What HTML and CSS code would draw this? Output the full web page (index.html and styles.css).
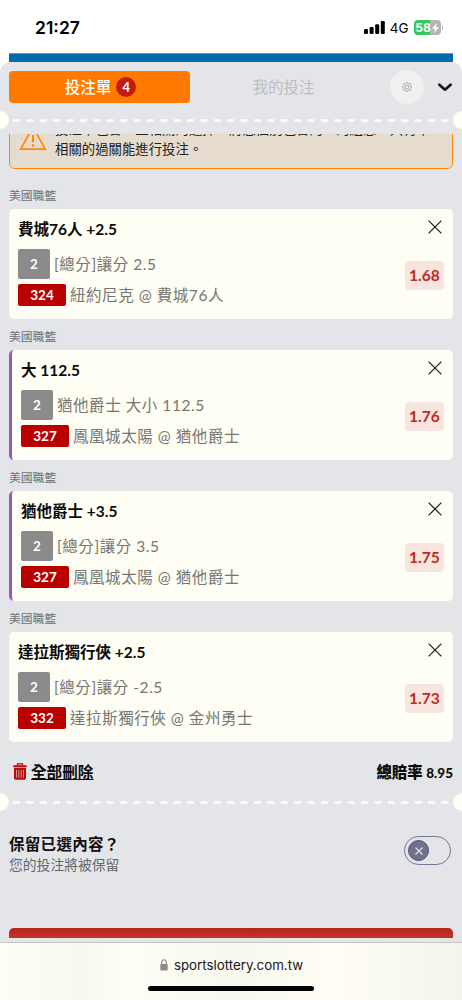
FILE: index.html
```
<!DOCTYPE html>
<html lang="zh-Hant">
<head>
<meta charset="utf-8">
<title>投注單</title>
<link rel="stylesheet" href="styles.css">
</head>
<body>
<div class="phone">
  <header class="status">
    <span class="time">21:27</span>
    <div class="status-right">
      <svg class="signal" width="21" height="13" viewBox="0 0 21 13"><rect x="0" y="8" width="4" height="5" rx="1.2"/><rect x="5.6" y="6" width="4" height="7" rx="1.2"/><rect x="11.2" y="3.2" width="4" height="9.8" rx="1.2"/><rect x="16.8" y="0" width="4" height="13" rx="1.2"/></svg>
      <span class="network">4G</span>
      <div class="battery"><span>58</span><svg width="7" height="10" viewBox="0 0 7 10"><path d="M4.8 0 0 5.7h2.8L2.1 10 7 4.2H4.2z" fill="#fff"/></svg></div>
      <i class="battery-tip"></i>
    </div>
  </header>
  <div class="site-strip"></div>
  <main class="sheet">
    <nav class="tabs">
      <div class="tab active"><span>投注單</span><b class="count">4</b></div>
      <div class="tab"><span>我的投注</span></div>
      <div class="gear"><svg width="10" height="10" viewBox="0 0 22 22" fill="none" stroke="#999" stroke-width="1.8"><path d="m9 2 2-1 2 1 1 2 3-1 2 2-1 3 2 1 1 2-1 2-2 1 1 3-2 2-3-1-1 2-2 1-2-1-1-2-3 1-2-2 1-3-2-1-1-2 1-2 2-1-1-3 2-2 3 1z"/><circle cx="11" cy="11" r="4.2"/></svg></div>
      <svg class="chevron" width="14" height="9" viewBox="0 0 14 9"><path d="m1.4 1.7 5.6 5 5.6-5" fill="none" stroke="#111" stroke-width="2.6" stroke-linecap="round" stroke-linejoin="round"/></svg>
    </nav>
    <div class="tear"><i></i><svg width="441" height="3" viewBox="0 0 441 3"><path d="M2 1.5h439" stroke="#fffef4" stroke-width="2.6" stroke-dasharray="7 6.39"/></svg><i></i></div>
    <div class="notice-window">
      <div class="notice">
        <svg width="28" height="26" viewBox="0 0 28 26" fill="none" stroke="#ff8a00" stroke-width="1.7"><path d="M14 2 26.3 24.2H1.7z"/><path d="M14 10v7" stroke-width="2"/><path d="M14 19.3v2.2" stroke-width="2.2"/></svg>
        <p>投注單包含一些相關的選擇。將您個別包含的，的組息。只有不<br>相關的過關能進行投注。</p>
      </div>
    </div>

    <section class="bet">
      <h3>美國職籃</h3>
      <article class="card">
        <div class="info"><h2>費城76人 +2.5</h2>
          <div class="line"><b class="tag gray">2</b><span>[總分]讓分 2.5</span></div>
          <div class="line"><b class="tag red">324</b><span>紐約尼克 @ 費城76人</span></div></div>
        <div class="side"><svg class="close" width="14" height="14" viewBox="0 0 14 14"><path d="m.6.6 12.8 12.8M13.4.6.6 13.4"/></svg><b class="odds">1.68</b></div>
      </article>
    </section>
    <section class="bet">
      <h3>美國職籃</h3>
      <article class="card marked">
        <div class="info"><h2>大 112.5</h2>
          <div class="line"><b class="tag gray">2</b><span>猶他爵士 大小 112.5</span></div>
          <div class="line"><b class="tag red">327</b><span>鳳凰城太陽 @ 猶他爵士</span></div></div>
        <div class="side"><svg class="close" width="14" height="14" viewBox="0 0 14 14"><path d="m.6.6 12.8 12.8M13.4.6.6 13.4"/></svg><b class="odds">1.76</b></div>
      </article>
    </section>
    <section class="bet">
      <h3>美國職籃</h3>
      <article class="card marked">
        <div class="info"><h2>猶他爵士 +3.5</h2>
          <div class="line"><b class="tag gray">2</b><span>[總分]讓分 3.5</span></div>
          <div class="line"><b class="tag red">327</b><span>鳳凰城太陽 @ 猶他爵士</span></div></div>
        <div class="side"><svg class="close" width="14" height="14" viewBox="0 0 14 14"><path d="m.6.6 12.8 12.8M13.4.6.6 13.4"/></svg><b class="odds">1.75</b></div>
      </article>
    </section>
    <section class="bet">
      <h3>美國職籃</h3>
      <article class="card">
        <div class="info"><h2>達拉斯獨行俠 +2.5</h2>
          <div class="line"><b class="tag gray">2</b><span>[總分]讓分 -2.5</span></div>
          <div class="line"><b class="tag red">332</b><span>達拉斯獨行俠 @ 金州勇士</span></div></div>
        <div class="side"><svg class="close" width="14" height="14" viewBox="0 0 14 14"><path d="m.6.6 12.8 12.8M13.4.6.6 13.4"/></svg><b class="odds">1.73</b></div>
      </article>
    </section>

    <div class="summary">
      <svg width="14" height="17" viewBox="0 0 14 17"><path d="M4.500 2.400V.8h5v1.600" fill="none" stroke="#b80b0b" stroke-width="1.300"/><path d="M.2 3.200h13.600" stroke="#b80b0b" stroke-width="1.900"/><path d="M1 4.800h12V15q0 1.700-1.700 1.700H2.700Q1 16.700 1 15z" fill="#b80b0b"/><path d="M3.500 7v7.800M5.800 7v7.800M8.200 7v7.800M10.500 7v7.800" stroke="#e3b4b5" stroke-width=".8"/></svg>
      <a>全部刪除</a>
      <strong>總賠率 <span>8.95</span></strong>
    </div>
    <div class="tear"><i></i><svg width="441" height="3" viewBox="0 0 441 3"><path d="M2 1.5h439" stroke="#fffef4" stroke-width="2.6" stroke-dasharray="7 6.39"/></svg><i></i></div>
    <div class="keep">
      <div><h2>保留已選內容？</h2><p>您的投注將被保留</p></div>
      <div class="switch"><div class="knob"><svg width="8" height="8" viewBox="0 0 8 8"><path d="m.5.5 7 7m0-7-7 7" stroke="#e4e5e8" stroke-width="1.1"/></svg></div></div>
    </div>
    <div class="submit"></div>
  </main>
  <footer class="browser">
    <div class="address"><svg width="8" height="12" viewBox="0 0 8 12"><path d="M1.800 5.500V3.300a2.200 2.500 0 0 1 4.400 0v2.200" fill="none" stroke="#8a8a86" stroke-width="1.1"/><rect x=".3" y="5" width="7.400" height="6.500" rx="1" fill="#8a8a86"/></svg><span>sportslottery.com.tw</span></div>
    <div class="home"></div>
  </footer>
</div>
</body>
</html>
```
FILE: styles.css
```
* { box-sizing: border-box; margin: 0; padding: 0; }
body { background: #fff; font-family: Lato, "Noto Sans CJK TC", sans-serif; }
.phone { width: 462px; height: 1000px; overflow: hidden; display: flex; flex-direction: column; }
svg { display: block; flex: none; }

.status { height: 53px; padding: 2px 19px 0 35px; display: flex; align-items: center; justify-content: space-between; font-family: Inter, sans-serif; }
.time { font-size: 17.5px; font-weight: 600; }
.status-right { display: flex; align-items: center; }
.network { font-size: 13.5px; margin: 0 5px 0 5px; }
.battery { width: 27px; height: 15px; border-radius: 4px; background: linear-gradient(90deg, #34c759 58%, #b4b4b4 58%); color: #fff; font-size: 12px; font-weight: 700; display: flex; align-items: center; justify-content: center; gap: 1px; }
.battery-tip { width: 1.5px; height: 5px; margin-left: 1px; background: #bbb; border-radius: 0 2px 2px 0; }
.site-strip { height: 9px; margin: 0 9px; background: #006cad; border-top: 1px solid #579fca; }

.sheet { height: 880px; background: #e4e5e8; border-radius: 10px 10px 0 0; display: flex; flex-direction: column; }
.tabs { height: 50px; padding: 0 10px 0 9px; display: flex; align-items: center; flex: none; }
.tab { width: 181px; height: 32px; border-radius: 4px; display: flex; align-items: center; justify-content: center; gap: 5px; color: #bcbdbf; font-size: 15.5px; flex: none; }
.tab span { padding-bottom: 2px; }
.tab.active { background: #ff7b00; color: #fff; padding-left: 2px; font-weight: 500; }
.tab:nth-child(2) { width: 187px; }
.count { width: 20px; height: 20px; border-radius: 50%; background: #c31b13; font-size: 13px; display: grid; place-items: center; }
.gear { width: 34px; height: 34px; margin-left: 13px; border-radius: 50%; background: #f0f0f1; display: grid; place-items: center; }
.chevron { margin-left: 14px; }
.tear { height: 18px; display: flex; align-items: center; justify-content: space-between; flex: none; }
.tear i { width: 9px; height: 18px; background: #fffef4; border-radius: 0 9px 9px 0; }
.tear i:last-child { border-radius: 9px 0 0 9px; }
.tabs + .tear { margin: -1px 0 5px; }

.notice-window { height: 35px; margin: 0 9px; overflow: hidden; display: flex; align-items: flex-end; flex: none; border-radius: 0 0 5px 5px; }
.notice { width: 444px; height: 58px; border: 1px solid #ff8a00; border-radius: 5px; background: #e5dbcf; display: flex; padding: 13px 0 0 9px; gap: 8px; flex: none; }
.notice p { font-size: 13.4px; line-height: 20px; white-space: nowrap; color: #222; margin-top: -6px; }

.bet { height: 141px; padding: 0 9px; flex: none; }
.bet h3 { height: 31px; font-size: 11.8px; line-height: 17px; padding-top: 9px; font-weight: 400; color: #6e6f71; }
.notice-window + .bet { height: 150px; padding-top: 9px; }
.card { height: 110px; border-radius: 5px; background: #fffef4; display: flex; justify-content: space-between; padding: 0 9px; }
.card.marked { border-left: 3.5px solid #9b59b6; }
.info { padding-top: 9px; }
.info h2 { font-size: 15.5px; line-height: 22px; font-weight: 700; color: #0b0b0b; margin-bottom: 9px; }
.line { display: flex; align-items: center; gap: 4px; font-size: 15.5px; letter-spacing: .55px; color: #777672; margin-bottom: 5px; }
.line span { line-height: 22px; white-space: nowrap; }
.tag { color: #fff; font-size: 13.5px; letter-spacing: 0; display: grid; place-items: center; border-radius: 2px; }
.gray { width: 32px; height: 30px; background: #8b8b8b; }
.red { width: 48px; height: 22px; background: #b80000; }
.side { display: flex; flex-direction: column; align-items: flex-end; padding-top: 11px; }
.close { margin-right: 2px; fill: none; stroke: #222; stroke-width: 1.3; }
.odds { width: 39px; height: 29px; margin-top: 27px; padding-bottom: 2px; border-radius: 4px; background: #f8e5df; color: #c22b22; font-size: 15.6px; display: grid; place-items: center; }

.summary { height: 51px; padding: 8px 9px 0 13px; display: flex; align-items: center; flex: none; font-weight: 700; color: #0b0b0b; }
.summary a { margin-left: 4px; padding-bottom: 2px; font-size: 15.6px; text-decoration: underline; text-decoration-skip-ink: none; text-underline-offset: 1px; }
.summary strong { margin-left: auto; padding-bottom: 2px; font-size: 15.4px; }
.summary strong span { font-size: 13.5px; }
.keep { height: 117px; padding: 20px 11px 0 9px; display: flex; justify-content: space-between; flex: none; }
.keep h2 { font-size: 15.5px; line-height: 26px; letter-spacing: .3px; color: #111; }
.keep p { font-size: 13.8px; line-height: 15px; color: #66676a; }
.switch { width: 47px; height: 29px; margin-top: 5px; border: 1px solid #77739a; border-radius: 15px; padding: 3px; }
.knob { width: 21px; height: 21px; border-radius: 50%; background: #72718b; border: 1.5px solid #504c73; display: grid; place-items: center; }
.submit { height: 10px; margin: 0 9px; border-radius: 5px 5px 0 0; background: linear-gradient(#b32419, #c3352a); flex: none; }
.browser { height: 58px; border-top: 1px solid #c5c5c1; background: linear-gradient(90deg, #fffef6, #f8f8ee 18%, #fffef6 28%, #f8f8ef 50%, #fffdf4 72%, #f4f5ea); display: flex; flex-direction: column; align-items: center; }
.address { height: 43px; padding-left: 1px; display: flex; align-items: center; gap: 6px; font: 13.3px Inter, sans-serif; color: #181818; }
.home { width: 166px; height: 5px; border-radius: 3px; background: #000; }
```
